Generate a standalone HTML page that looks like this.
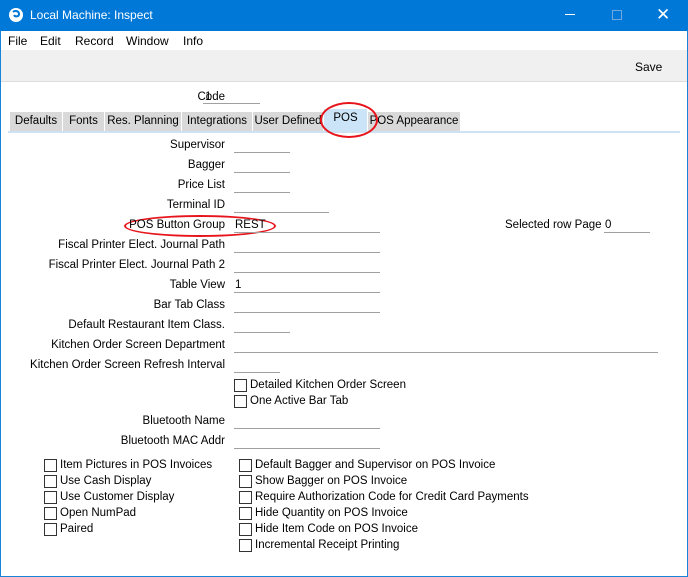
<!DOCTYPE html>
<html><head><style>
*{margin:0;padding:0;box-sizing:border-box}
body{width:688px;height:577px;overflow:hidden;font-family:"Liberation Sans",sans-serif;font-size:11.5px;color:#000;background:#fff;position:relative}
.a{position:absolute;white-space:nowrap}
.l{position:absolute;right:463px;white-space:nowrap;text-align:right}
.f{position:absolute;height:1px;background:#a0a0a0}
.cb{position:absolute;width:13px;height:13px;border:1px solid #333;background:#fff}
.tab{position:absolute;top:112px;height:19px;background:#d9d9d9;line-height:19px;text-align:center;border-right:1px solid #fff}
</style></head><body>
<div class="a" style="left:0;top:0;width:688px;height:577px;border:1px solid #1883d7"></div>
<div class="a" style="left:0;top:0;width:688px;height:31px;background:#0078d7;color:#fff">
 <svg class="a" style="left:8px;top:7px" width="16" height="16" viewBox="0 0 16 16"><circle cx="8" cy="8" r="7" fill="#fff"/><path d="M5 5c2-2 6-1 6 2s-4 3-5 1" stroke="#0078d7" stroke-width="2" fill="none"/></svg>
 <span class="a" style="left:30px;top:8px;font-size:12px">Local Machine: Inspect</span>
 <span class="a" style="left:565px;top:14px;width:10px;height:1px;background:#fff"></span>
 <span class="a" style="left:612px;top:10px;width:10px;height:10px;border:1px solid #6fa8dc"></span>
 <span class="a" style="left:656px;top:5px;font-size:17px">✕</span>
</div>
<div class="a" style="left:1px;top:31px;width:686px;height:20px;background:#fff;font-size:12px">
 <span class="a" style="left:7px;top:3px">File</span><span class="a" style="left:39px;top:3px">Edit</span><span class="a" style="left:74px;top:3px">Record</span><span class="a" style="left:125px;top:3px">Window</span><span class="a" style="left:182px;top:3px">Info</span>
</div>
<div class="a" style="left:1px;top:50px;width:686px;height:32px;background:#f0f0f0;border-bottom:1px solid #ddd"><span class="a" style="left:634px;top:10px;font-size:12px">Save</span></div>
<span class="l" style="top:91px">Code</span><span class="a" style="left:205px;top:91px">1</span><div class="f" style="left:203px;top:103px;width:57px"></div>
<div class="tab" style="left:10px;width:53px">Defaults</div>
<div class="tab" style="left:63px;width:42px">Fonts</div>
<div class="tab" style="left:105px;width:77px">Res. Planning</div>
<div class="tab" style="left:182px;width:71px">Integrations</div>
<div class="tab" style="left:253px;width:71px">User Defined</div>
<div class="tab" style="left:324px;width:44px;background:#cce4f7;top:109px;height:22px">POS</div>
<div class="tab" style="left:368px;width:93px">POS Appearance</div>
<div class="a" style="left:8px;top:131px;width:672px;height:2px;background:#cfe2f3"></div>
<div class="a" style="left:320px;top:102px;width:58px;height:36px;border:2.5px solid #e8141c;border-radius:50%"></div>
<div class="a" style="left:124px;top:215px;width:152px;height:22px;border:2.5px solid #e8141c;border-radius:50%"></div>

<span class="l" style="top:139px">Supervisor</span><div class="f" style="left:234px;top:152px;width:56px"></div>
<span class="l" style="top:159px">Bagger</span><div class="f" style="left:234px;top:172px;width:56px"></div>
<span class="l" style="top:179px">Price List</span><div class="f" style="left:234px;top:192px;width:56px"></div>
<span class="l" style="top:199px">Terminal ID</span><div class="f" style="left:234px;top:212px;width:95px"></div>
<span class="l" style="top:219px">POS Button Group</span><span class="a" style="left:235px;top:219px">REST</span><div class="f" style="left:234px;top:232px;width:146px"></div>
<span class="a" style="left:505px;top:219px">Selected row Page</span><span class="a" style="left:605px;top:219px">0</span><div class="f" style="left:604px;top:232px;width:46px"></div>
<span class="l" style="top:239px">Fiscal Printer Elect. Journal Path</span><div class="f" style="left:234px;top:252px;width:146px"></div>
<span class="l" style="top:259px">Fiscal Printer Elect. Journal Path 2</span><div class="f" style="left:234px;top:272px;width:146px"></div>
<span class="l" style="top:279px">Table View</span><span class="a" style="left:235px;top:279px">1</span><div class="f" style="left:234px;top:292px;width:146px"></div>
<span class="l" style="top:299px">Bar Tab Class</span><div class="f" style="left:234px;top:312px;width:146px"></div>
<span class="l" style="top:319px">Default Restaurant Item Class.</span><div class="f" style="left:234px;top:332px;width:56px"></div>
<span class="l" style="top:339px">Kitchen Order Screen Department</span><div class="f" style="left:234px;top:352px;width:424px"></div>
<span class="l" style="top:359px">Kitchen Order Screen Refresh Interval</span><div class="f" style="left:234px;top:372px;width:46px"></div>
<div class="cb" style="left:234px;top:379px"></div><span class="a" style="left:250px;top:379px">Detailed Kitchen Order Screen</span>
<div class="cb" style="left:234px;top:395px"></div><span class="a" style="left:250px;top:395px">One Active Bar Tab</span>
<span class="l" style="top:415px">Bluetooth Name</span><div class="f" style="left:234px;top:428px;width:146px"></div>
<span class="l" style="top:435px">Bluetooth MAC Addr</span><div class="f" style="left:234px;top:448px;width:146px"></div>

<div class="cb" style="left:44px;top:459px"></div><span class="a" style="left:60px;top:459px">Item Pictures in POS Invoices</span>
<div class="cb" style="left:44px;top:475px"></div><span class="a" style="left:60px;top:475px">Use Cash Display</span>
<div class="cb" style="left:44px;top:491px"></div><span class="a" style="left:60px;top:491px">Use Customer Display</span>
<div class="cb" style="left:44px;top:507px"></div><span class="a" style="left:60px;top:507px">Open NumPad</span>
<div class="cb" style="left:44px;top:523px"></div><span class="a" style="left:60px;top:523px">Paired</span>
<div class="cb" style="left:239px;top:459px"></div><span class="a" style="left:255px;top:459px">Default Bagger and Supervisor on POS Invoice</span>
<div class="cb" style="left:239px;top:475px"></div><span class="a" style="left:255px;top:475px">Show Bagger on POS Invoice</span>
<div class="cb" style="left:239px;top:491px"></div><span class="a" style="left:255px;top:491px">Require Authorization Code for Credit Card Payments</span>
<div class="cb" style="left:239px;top:507px"></div><span class="a" style="left:255px;top:507px">Hide Quantity on POS Invoice</span>
<div class="cb" style="left:239px;top:523px"></div><span class="a" style="left:255px;top:523px">Hide Item Code on POS Invoice</span>
<div class="cb" style="left:239px;top:539px"></div><span class="a" style="left:255px;top:539px">Incremental Receipt Printing</span>
</body></html>
